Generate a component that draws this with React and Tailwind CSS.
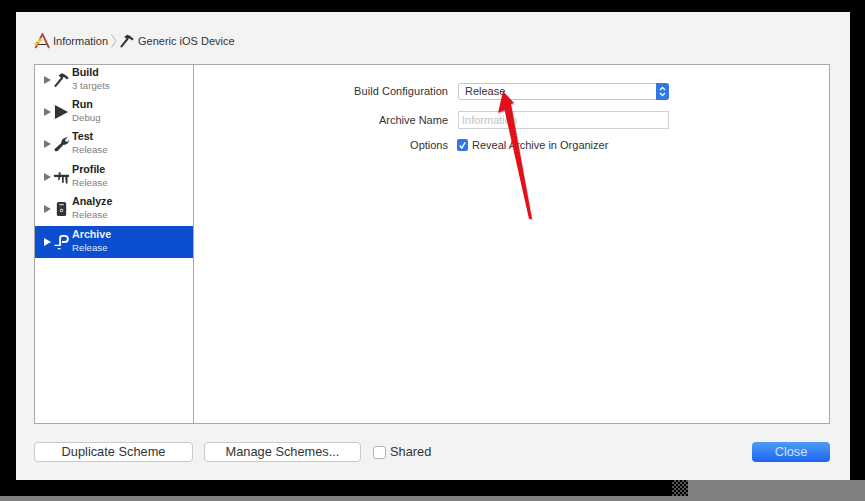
const font = { fontFamily: '"Liberation Sans", Arial, sans-serif' }

function Hammer({ className = '' }) {
  return (
    <svg viewBox="0 0 16 16" className={className}>
      <path d="M1.8 15.6 L0.2 14.4 L7.4 5.2 L4.8 3.4 L8 0.8 C10.4 1 12.8 3 15.8 5.8 L13.6 7.4 C12.6 6 11.2 5 10 4.8 L9.4 6.6 Z" fill="#333" />
    </svg>
  )
}

function Wrench({ className = '' }) {
  return (
    <svg viewBox="0 0 16 16" className={className}>
      <path d="M1.4 15.8 L0.4 13.6 L7.8 7 C7.6 3.4 10.6 0.6 14.6 1 L11.8 3.4 L12.6 5.6 L14.8 5.2 L15.8 3 C16.2 6.6 13.4 9.2 10 8.8 L3.6 15.8 Z" fill="#333" />
    </svg>
  )
}

function Caliper({ className = '' }) {
  return (
    <svg viewBox="0 0 16 16" className={className}>
      <path d="M0 5.5 H5 V3 H7 V5.5 H16 V8 H14.4 V15 H12.6 L12 8 H10.4 V14 H8.6 V8 H6.6 L5.8 11.5 H4.6 V8 H0 Z" fill="#333" />
    </svg>
  )
}

function Lock({ className = '' }) {
  return (
    <svg viewBox="0 0 16 16" className={className}>
      <rect x="3" y="0.5" width="10" height="15" rx="2" fill="#333" />
      <rect x="5.5" y="2.5" width="5" height="1.6" fill="#bbb" />
      <circle cx="8" cy="9.5" r="2" fill="#bbb" />
      <rect x="7.3" y="9" width="1.4" height="1.4" fill="#333" />
    </svg>
  )
}

function ArchiveIcon({ className = '' }) {
  return (
    <svg viewBox="0 0 16 16" className={className} fill="none" stroke="#fff" strokeWidth="2">
      <path d="M6.5 12 V4 Q6.5 1.5 9 1.5 H11.5 Q14.8 1.5 14.8 4.8 Q14.8 8 11.5 8 H8.5" />
      <path d="M0.5 11.5 H6.5 M4 15 H7" strokeWidth="1.3" />
    </svg>
  )
}

function Play({ className = '' }) {
  return (
    <svg viewBox="0 0 16 16" className={className}>
      <path d="M1 0.5 L15 8 L1 15.5 Z" fill="#333" />
    </svg>
  )
}

function XcodeLogo({ className = '' }) {
  return (
    <svg viewBox="0 0 16 16" className={className}>
      <path d="M1.5 15 L8.5 1 L15 15" fill="none" stroke="#b8442e" strokeWidth="1.8" />
      <path d="M4 11.5 H12.5" stroke="#333" strokeWidth="1" />
      <path d="M1 12 L7.5 6" stroke="#eccb3c" strokeWidth="3" />
      <path d="M2.5 9 L5 11.5" stroke="#8a6a20" strokeWidth="0.8" />
    </svg>
  )
}

const rows = [
  { name: 'Build', sub: '3 targets', Icon: Hammer },
  { name: 'Run', sub: 'Debug', Icon: Play },
  { name: 'Test', sub: 'Release', Icon: Wrench },
  { name: 'Profile', sub: 'Release', Icon: Caliper },
  { name: 'Analyze', sub: 'Release', Icon: Lock },
  { name: 'Archive', sub: 'Release', Icon: ArchiveIcon, active: true },
]

function SchemeRow({ name, sub, Icon, active }) {
  return (
    <div className={`flex items-center h-[32.4px] pl-[9px] pb-[1px] ${active ? 'bg-[#0b4fd0]' : ''}`}>
      <svg viewBox="0 0 7 8" className="w-[7px] h-[8px] shrink-0">
        <path d="M0 0 L7 4 L0 8 Z" fill={active ? '#fff' : '#777'} />
      </svg>
      <Icon className="w-[15px] h-[16px] ml-[3px] shrink-0" />
      <div className="ml-[3px] -mt-[2px] flex flex-col">
        <span className={`text-[10.7px] leading-[13px] font-bold ${active ? 'text-[#e8eefc]' : 'text-[#222]'}`}>{name}</span>
        <span className={`text-[9.7px] leading-[13px] ${active ? 'text-[#dfe8fb]' : 'text-[#808080]'}`}>{sub}</span>
      </div>
    </div>
  )
}

function FooterButton({ children, className = '' }) {
  return (
    <button className={`h-[20px] bg-white border border-[#c9c9c9] rounded-[4px] text-[12.8px] leading-none text-[#333] ${className}`}>
      {children}
    </button>
  )
}

export default function App() {
  return (
    <div className="relative w-[865px] h-[501px] overflow-hidden bg-black flex flex-col" style={font}>
      <div className="ml-[16px] mt-[12px] w-[834px] h-[468px] shrink-0 bg-[#f3f3f3] pl-[18px] pr-[20px] flex flex-col">
        {/* Breadcrumb */}
        <div className="h-[52px] pt-[6px] flex items-center text-[11px] text-[#333]">
          <XcodeLogo className="w-[16px] h-[16px]" />
          <span className="ml-[3px]">Information</span>
          <svg viewBox="0 0 6 14" className="w-[6px] h-[14px] ml-[3px]" fill="none" stroke="#b5b5b5">
            <path d="M0.5 0.5 L5 7 L0.5 13.5" />
          </svg>
          <Hammer className="w-[14px] h-[14px] ml-[3px]" />
          <span className="ml-[4px]">Generic iOS Device</span>
        </div>

        {/* Scheme editor */}
        <div className="h-[360px] bg-white border border-[#a9a9a9] flex">
          <div className="w-[159px] shrink-0 border-r border-[#a9a9a9] -mt-px">
            {rows.map((row) => (
              <SchemeRow key={row.name} {...row} />
            ))}
          </div>
          <div className="flex-1 pt-[17px] text-[11px] text-[#333]">
            <div className="flex items-center h-[18px]">
              <span className="w-[254px] text-right tracking-[0.05px]">Build Configuration</span>
              <div className="ml-[10px] w-[211px] h-[17px] bg-white border border-[#c4c4c4] rounded-[3px] flex items-center justify-between pl-[6px]">
                <span>Release</span>
                <span className="w-[13px] h-[17px] -mr-px bg-[#2f78e4] rounded-r-[3px] flex items-center justify-center">
                  <svg viewBox="0 0 7 11" className="w-[7px] h-[11px]" fill="none" stroke="#fff" strokeWidth="1.3">
                    <path d="M1 4 L3.5 1.5 L6 4 M1 7 L3.5 9.5 L6 7" />
                  </svg>
                </span>
              </div>
            </div>
            <div className="flex items-center h-[18px] mt-[11px]">
              <span className="w-[254px] text-right">Archive Name</span>
              <div className="ml-[10px] w-[211px] h-[18px] bg-white border border-[#d0d0d0] pl-[3px] flex items-center text-[#c2c2c2]">
                Information
              </div>
            </div>
            <div className="flex items-center h-[14px] mt-[9px]">
              <span className="w-[254px] text-right">Options</span>
              <span className="ml-[9px] w-[11px] h-[12px] bg-[#2f78e4] rounded-[2px] flex items-center justify-center">
                <svg viewBox="0 0 10 10" className="w-[9px] h-[9px]" fill="none" stroke="#fff" strokeWidth="1.6">
                  <path d="M2 5 L4.2 7.8 L8 1.5" />
                </svg>
              </span>
              <span className="ml-[4px]">Reveal Archive in Organizer</span>
            </div>
          </div>
        </div>

        {/* Footer */}
        <div className="mt-[18px] flex items-center">
          <FooterButton className="w-[159px]">Duplicate Scheme</FooterButton>
          <FooterButton className="ml-[11px] w-[157px]">Manage Schemes...</FooterButton>
          <span className="ml-[12px] w-[13px] h-[13px] bg-white border border-[#b5b5b5] rounded-[3px]" />
          <span className="ml-[4px] text-[12.8px] text-[#333]">Shared</span>
          <button className="ml-auto w-[78px] h-[20px] rounded-[4px] bg-gradient-to-b from-[#4f9bf5] to-[#1c64f0] text-[12.8px] leading-none text-[#cfe2fb]">
            Close
          </button>
        </div>
      </div>

      {/* Strip under the window */}
      <div className="flex flex-1">
        <div className="w-[672px] flex flex-col">
          <div className="h-[16px] bg-black" />
          <div className="flex-1 bg-[#808080]" />
        </div>
        <div className="w-[16px] flex flex-col">
          <div className="h-[16px] bg-[repeating-conic-gradient(#555_0_25%,#000_0_50%)] bg-[length:4px_4px]" />
          <div className="flex-1 bg-[#808080]" />
        </div>
        <div className="flex-1 bg-[#808080]" />
      </div>

      {/* Annotation arrow */}
      <svg className="absolute left-0 top-0 w-[865px] h-[501px] pointer-events-none" viewBox="0 0 865 501">
        <path d="M503 91 L514 103 L511 104 L532 219 L529 219 L504.5 110 L498 113 Z" fill="#000" opacity="0.18" transform="translate(1 1.5)" />
        <path d="M503 91 L514 103 L511 104 L532 219 L529 219 L504.5 110 L498 113 Z" fill="#e3101a" />
      </svg>
    </div>
  )
}
